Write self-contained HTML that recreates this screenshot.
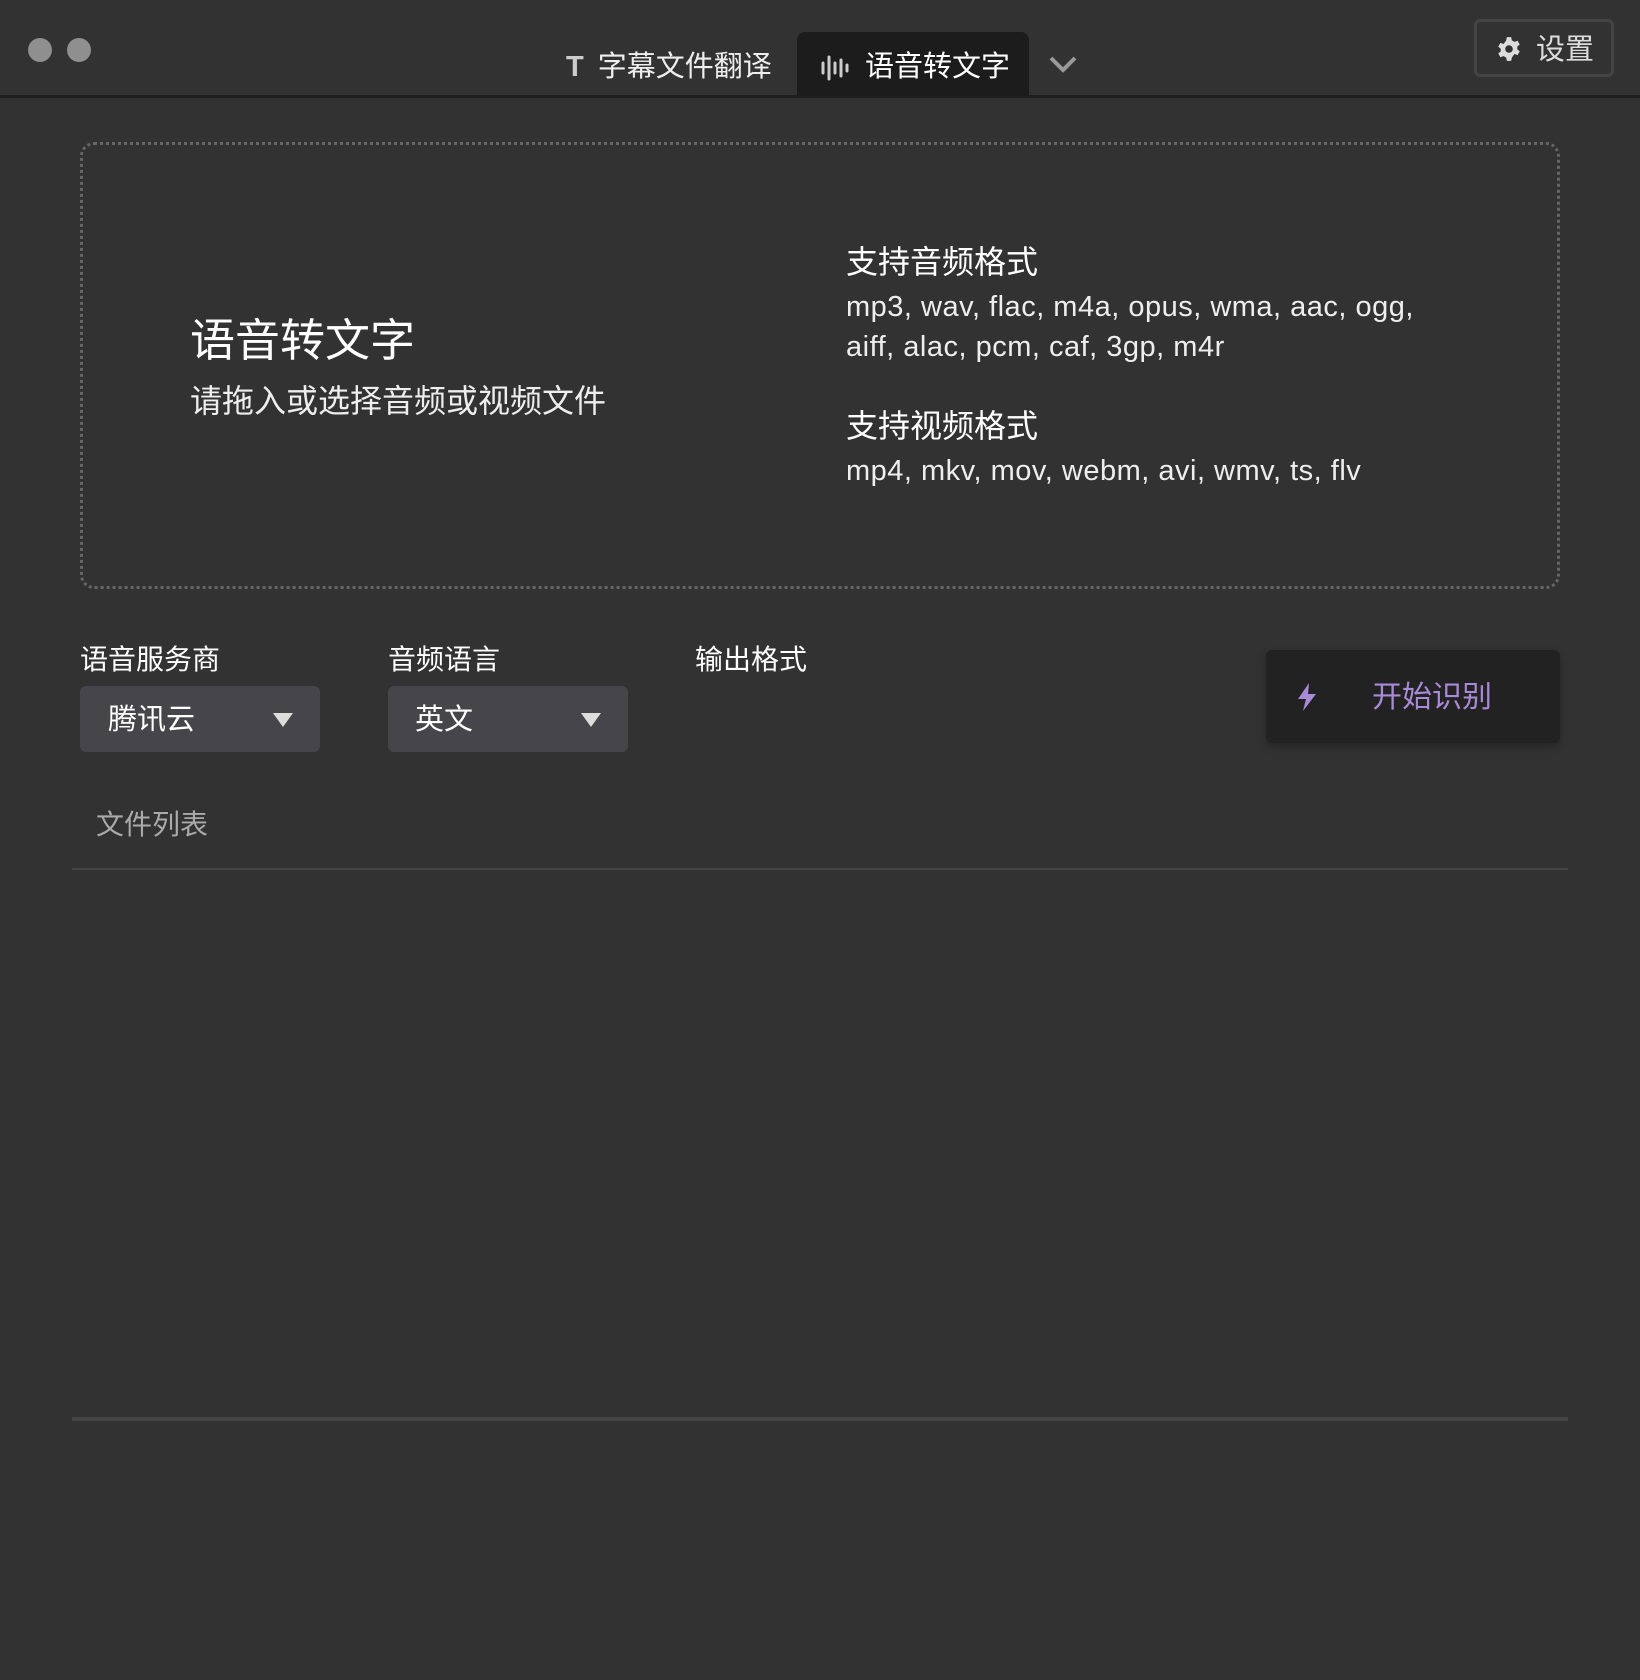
<!DOCTYPE html>
<html><head><meta charset="utf-8"><style>
*{margin:0;padding:0;box-sizing:border-box}
body{width:1640px;height:1680px;background:#323232;font-family:"Liberation Sans","Noto Sans CJK SC",sans-serif;color:#fff;position:relative;overflow:hidden}
.a{position:absolute;white-space:nowrap}
.dot{position:absolute;width:24px;height:24px;border-radius:50%;background:#8f8f8f;top:38px}
</style></head><body>
<div class="a" style="left:0;top:95px;width:1640px;height:3px;background:#1e1e1e"></div>
<div class="dot" style="left:28px"></div><div class="dot" style="left:67px"></div>
<div class="a" style="left:566px;top:47px;font-size:29px;line-height:40px;color:#eee"><span style="font-weight:bold;color:#ccc;margin-right:14px">T</span>字幕文件翻译</div>
<div class="a" style="left:797px;top:32px;width:232px;height:64px;background:#1c1c1c;border-radius:8px 8px 0 0"></div>
<svg class="a" style="left:820px;top:54px" width="30" height="28" viewBox="0 0 30 28" stroke="#ccc" stroke-width="3" stroke-linecap="round"><path d="M3 9v10M9 3v22M15 9v10M21 6v16M27 11v6"/></svg>
<div class="a" style="left:865px;top:47px;font-size:29px;line-height:40px;color:#fff">语音转文字</div>
<svg class="a" style="left:1048px;top:54px" width="30" height="20" viewBox="0 0 30 20" fill="none" stroke="#999" stroke-width="4"><path d="M3 4l12 12 12-12"/></svg>
<div class="a" style="left:1474px;top:19px;width:140px;height:58px;border:3px solid #444;border-radius:6px"></div>
<svg class="a" style="left:1496px;top:36px" width="26" height="26" viewBox="0 0 24 24"><path fill="#ddd" d="M10 1h4l.6 3 2.4 1.4 2.9-1 2 3.4-2.3 2a8 8 0 010 2.4l2.3 2-2 3.4-2.9-1L14.6 20 14 23h-4l-.6-3-2.4-1.4-2.9 1-2-3.4 2.3-2a8 8 0 010-2.4l-2.3-2 2-3.4 2.9 1L9.4 4z"/><circle cx="12" cy="12" r="3.5" fill="#323232"/></svg>
<div class="a" style="left:1536px;top:30px;font-size:29px;line-height:40px;color:#ddd">设置</div>
<div class="a" style="left:80px;top:142px;width:1480px;height:447px;border:3px dotted #666;border-radius:14px"></div>
<div class="a" style="left:190px;top:313px;font-size:45px;line-height:56px">语音转文字</div>
<div class="a" style="left:190px;top:380px;font-size:32px;line-height:42px;color:#eee">请拖入或选择音频或视频文件</div>
<div class="a" style="left:846px;top:241px;font-size:32px;line-height:42px">支持音频格式</div>
<div class="a" style="left:846px;top:287px;font-size:29px;line-height:40px;color:#eee;letter-spacing:0.5px">mp3, wav, flac, m4a, opus, wma, aac, ogg,<br>aiff, alac, pcm, caf, 3gp, m4r</div>
<div class="a" style="left:846px;top:405px;font-size:32px;line-height:42px">支持视频格式</div>
<div class="a" style="left:846px;top:451px;font-size:29px;line-height:40px;color:#eee;letter-spacing:0.5px">mp4, mkv, mov, webm, avi, wmv, ts, flv</div>
<div class="a" style="left:80px;top:641px;font-size:28px;line-height:38px">语音服务商</div>
<div class="a" style="left:388px;top:641px;font-size:28px;line-height:38px">音频语言</div>
<div class="a" style="left:695px;top:641px;font-size:28px;line-height:38px">输出格式</div>
<div class="a" style="left:80px;top:686px;width:240px;height:66px;background:#46464a;border-radius:6px"></div>
<div class="a" style="left:108px;top:700px;font-size:29px;line-height:40px">腾讯云</div>
<svg class="a" style="left:272px;top:712px" width="22" height="16"><path d="M1 1h20L11 15z" fill="#ddd"/></svg>
<div class="a" style="left:388px;top:686px;width:240px;height:66px;background:#46464a;border-radius:6px"></div>
<div class="a" style="left:415px;top:700px;font-size:29px;line-height:40px">英文</div>
<svg class="a" style="left:580px;top:712px" width="22" height="16"><path d="M1 1h20L11 15z" fill="#ddd"/></svg>
<div class="a" style="left:1266px;top:650px;width:294px;height:93px;background:#222;border-radius:6px;box-shadow:0 4px 8px rgba(0,0,0,.25)"></div>
<svg class="a" style="left:1296px;top:682px" width="22" height="30" viewBox="0 0 22 30"><path d="M13 1L2 17h8l-3 12 13-17h-8z" fill="#a98ad8"/></svg>
<div class="a" style="left:1372px;top:678px;font-size:30px;line-height:40px;color:#a98ad8">开始识别</div>
<div class="a" style="left:96px;top:805px;font-size:28px;line-height:40px;color:#aaa">文件列表</div>
<div class="a" style="left:72px;top:868px;width:1496px;height:2px;background:#444"></div>
<div class="a" style="left:72px;top:1417px;width:1496px;height:4px;background:#444"></div>
</body></html>
